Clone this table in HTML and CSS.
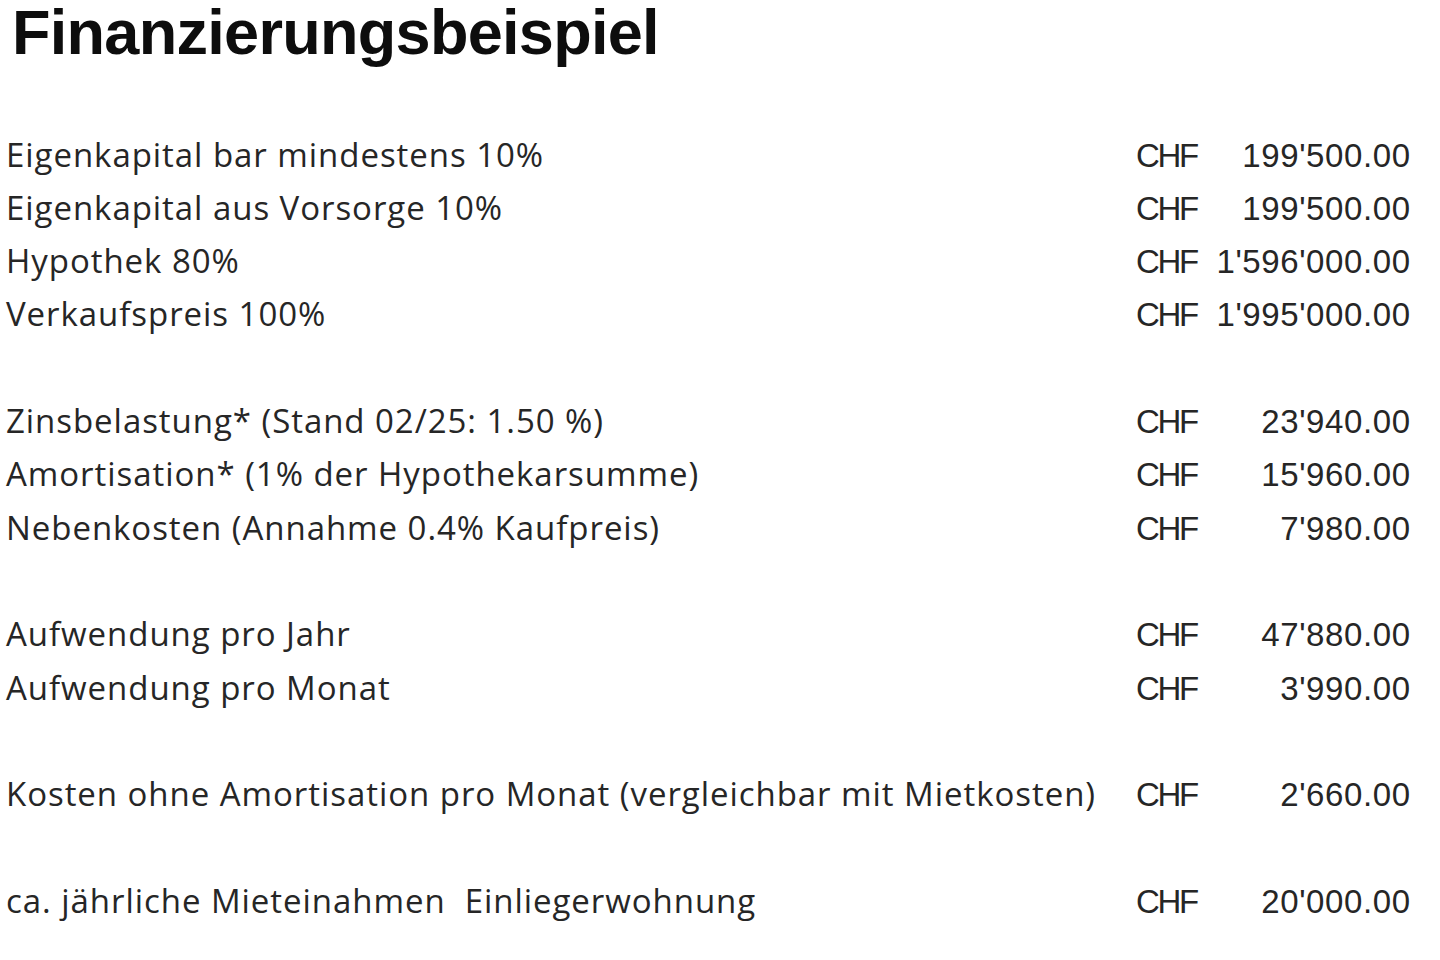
FILE: index.html
```html
<!DOCTYPE html>
<html lang="de">
<head>
<meta charset="utf-8">
<title>Finanzierungsbeispiel</title>
<link rel="stylesheet" href="styles.css">
</head>
<body>
<main class="sheet">
  <h1 class="title">Finanzierungsbeispiel</h1>
  <section class="group">
    <div class="row"><span class="label">Eigenkapital bar mindestens 10%</span><span class="cur">CHF</span><span class="amt">199'500.00</span></div>
    <div class="row"><span class="label">Eigenkapital aus Vorsorge 10%</span><span class="cur">CHF</span><span class="amt">199'500.00</span></div>
    <div class="row"><span class="label">Hypothek 80%</span><span class="cur">CHF</span><span class="amt">1'596'000.00</span></div>
    <div class="row"><span class="label">Verkaufspreis 100%</span><span class="cur">CHF</span><span class="amt">1'995'000.00</span></div>
  </section>
  <section class="group">
    <div class="row"><span class="label">Zinsbelastung* (Stand 02/25: 1.50 %)</span><span class="cur">CHF</span><span class="amt">23'940.00</span></div>
    <div class="row"><span class="label">Amortisation* (1% der Hypothekarsumme)</span><span class="cur">CHF</span><span class="amt">15'960.00</span></div>
    <div class="row"><span class="label">Nebenkosten (Annahme 0.4% Kaufpreis)</span><span class="cur">CHF</span><span class="amt">7'980.00</span></div>
  </section>
  <section class="group">
    <div class="row"><span class="label">Aufwendung pro Jahr</span><span class="cur">CHF</span><span class="amt">47'880.00</span></div>
    <div class="row"><span class="label">Aufwendung pro Monat</span><span class="cur">CHF</span><span class="amt">3'990.00</span></div>
  </section>
  <section class="group">
    <div class="row"><span class="label">Kosten ohne Amortisation pro Monat (vergleichbar mit Mietkosten)</span><span class="cur">CHF</span><span class="amt">2'660.00</span></div>
  </section>
  <section class="group">
    <div class="row"><span class="label">ca. jährliche Mieteinahmen&nbsp; Einliegerwohnung</span><span class="cur">CHF</span><span class="amt">20'000.00</span></div>
  </section>
</main>
</body>
</html>
```

FILE: styles.css
```css
html, body {
  margin: 0;
  padding: 0;
  background: #ffffff;
}

.sheet {
  width: 1440px;
  height: 960px;
  overflow: hidden;
  padding: 0 30px 0 6px;
  box-sizing: border-box;
}

.title {
  margin: 0 0 63.5px 6px;
  font-family: "Liberation Sans", Arial, sans-serif;
  font-weight: 700;
  font-size: 63px;
  line-height: 64px;
  letter-spacing: -0.7px;
  color: #0d0d0d;
}

.group {
  display: flex;
  flex-direction: column;
}

.group + .group {
  margin-top: 53.33px;
}

.row {
  display: grid;
  grid-template-columns: 1130px 74px 1fr;
  align-items: baseline;
  height: 53.33px;
  line-height: 53.33px;
  color: #262626;
}

.label {
  font-family: "Open Sans", "Noto Sans", sans-serif;
  font-size: 33px;
  letter-spacing: 0.95px;
  white-space: nowrap;
}

.cur,
.amt {
  font-family: "Liberation Sans", Arial, sans-serif;
  font-size: 33px;
  white-space: nowrap;
}

.cur {
  letter-spacing: -2.3px;
}

.amt {
  text-align: right;
  letter-spacing: 0.6px;
  margin-right: -0.6px;
}
```
